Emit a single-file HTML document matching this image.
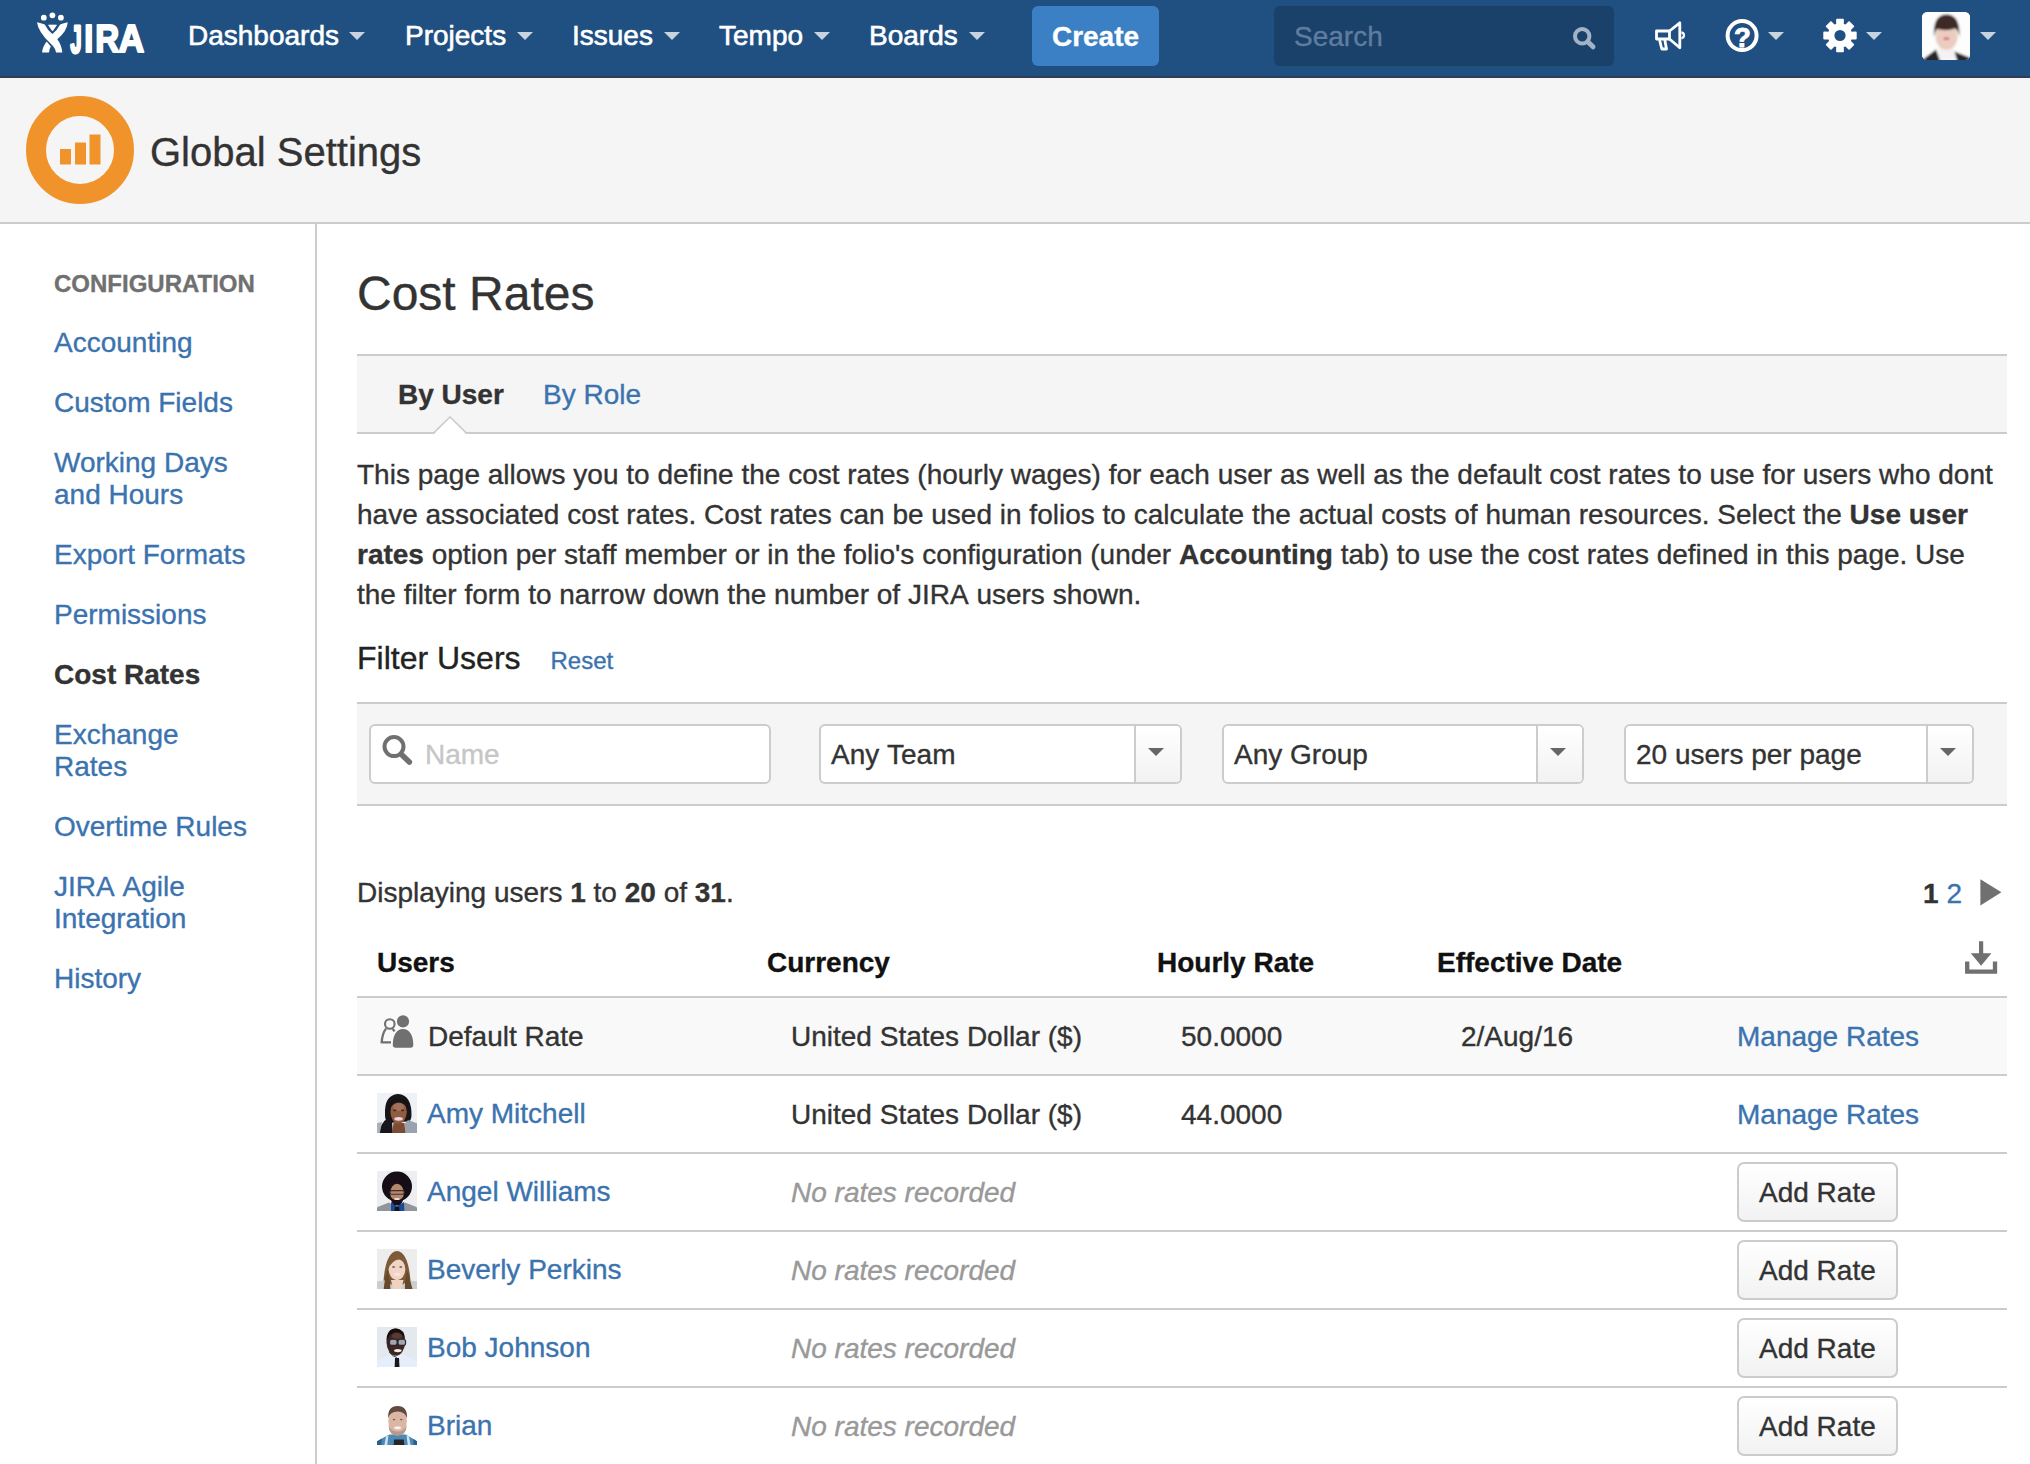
<!DOCTYPE html>
<html lang="en">
<head>
<meta charset="utf-8">
<title>Cost Rates - Global Settings - JIRA</title>
<style>
*{box-sizing:border-box;margin:0;padding:0}
html,body{width:2030px;height:1464px;overflow:hidden;background:#fff}
body{font-family:"Liberation Sans",Arial,sans-serif;font-size:28px;color:#333;position:relative;line-height:40px;-webkit-text-stroke:0.35px}
.nk{font-kerning:none}
a{color:#3b73af;text-decoration:none}
.abs{position:absolute}
/* ---------- top nav ---------- */
#header{position:absolute;left:0;top:0;width:2030px;height:78px;background:#205081;border-bottom:2px solid #2e3d54}
#header .nav{position:absolute;top:0;height:76px;line-height:72px;color:#fff;font-size:28px;white-space:nowrap;-webkit-text-stroke:0.6px #fff}
#header .caret{position:absolute;width:0;height:0;border:8px solid transparent;border-top-color:#c3d0de;border-bottom:0}
#create{position:absolute;left:1032px;top:6px;width:127px;height:60px;background:#3b7fc4;border-radius:6px;color:#fff;font-weight:bold;font-size:28px;line-height:62px;text-align:center}
#search{position:absolute;left:1274px;top:6px;width:340px;height:60px;background:#1a4169;border-radius:6px;color:#607da0;font-size:28px;line-height:62px;padding-left:20px}
/* ---------- page header ---------- */
#pagehead{position:absolute;left:0;top:78px;width:2030px;height:146px;background:#f5f5f5;border-bottom:2px solid #ccc}
#pagehead h1{position:absolute;left:150px;top:44px;font-size:40px;font-weight:normal;line-height:60px;color:#333}
/* ---------- sidebar ---------- */
#sidebar{position:absolute;left:0;top:224px;width:317px;height:1240px;border-right:2px solid #ccc;background:#fff}
#sidebar .hd{position:absolute;left:54px;top:44px;font-size:24px;font-weight:bold;color:#707070;line-height:32px;text-transform:uppercase}
#sidebar ul{position:absolute;left:54px;top:89px;list-style:none;width:230px}
#sidebar li{padding:14px 0;line-height:32px;font-size:28px}
#sidebar li.sel{font-weight:bold;color:#333}
/* ---------- content ---------- */
#content{position:absolute;left:357px;top:224px;width:1650px}
h1.title{position:absolute;left:0;top:40px;font-size:48px;font-weight:normal;line-height:60px;color:#333;white-space:nowrap}
#tabs{position:absolute;left:0;top:130px;width:1650px;height:80px;background:#f5f5f5;border-top:2px solid #ccc;border-bottom:2px solid #ccc}
#tabs span{position:absolute;top:19px;line-height:40px;font-size:28px;white-space:nowrap}
#desc{position:absolute;left:0;top:231px;width:1700px;line-height:40px;font-size:28px;white-space:nowrap;color:#333}
#filterh{position:absolute;left:0;top:412px;font-size:32px;line-height:44px;white-space:nowrap;color:#222}
#filter{position:absolute;left:0;top:478px;width:1650px;height:104px;background:#f5f5f5;border-top:2px solid #ccc;border-bottom:2px solid #ccc}
.inp{position:absolute;top:20px;height:60px;background:#fff;border:2px solid #ccc;border-radius:6px;font-size:28px;line-height:58px;white-space:nowrap;color:#333}
.sel .arrowbox{position:absolute;right:0;top:0;width:46px;height:56px;border-left:2px solid #ccc;background:linear-gradient(#fff,#f2f2f2);border-radius:0 4px 4px 0}
.sel .arrowbox i{position:absolute;left:12px;top:22px;width:0;height:0;border:8px solid transparent;border-top-color:#666;border-bottom:0}
#disp{position:absolute;left:0;top:649px;line-height:40px;white-space:nowrap}
#pager{position:absolute;right:45px;top:650px;line-height:40px;white-space:nowrap}
table{position:absolute;left:0;top:699px;width:1650px;border-collapse:collapse;table-layout:fixed}
th{height:74px;text-align:left;font-weight:bold;color:#111;padding:6px 0 0 20px;border-bottom:2px solid #ccc;vertical-align:middle}
td{height:78px;padding:2px 0 0 44px;border-bottom:2px solid #ccc;vertical-align:middle;white-space:nowrap}
td.u{padding-left:20px}
tr.def td{background:#f9f9f9}
.none{font-style:italic;color:#999}
.btn{display:inline-block;height:60px;line-height:58px;padding:0 20px;border:2px solid #ccc;border-radius:7px;background:linear-gradient(#fff,#f2f2f2);color:#333;vertical-align:middle;position:relative;top:-1px}
.av{display:inline-block;width:40px;height:40px;vertical-align:middle;margin-right:10px;position:relative;top:-3px}
</style>
</head>
<body>

<div id="header">
  <span class="nav" style="left:188px">Dashboards</span>
  <span class="nav" style="left:405px">Projects</span>
  <span class="nav" style="left:572px">Issues</span>
  <span class="nav" style="left:719px">Tempo</span>
  <span class="nav" style="left:869px">Boards</span>

  <div id="search">Search</div>
  <svg class="abs" style="left:0;top:0" width="2030" height="76" viewBox="0 0 2030 76">
    <!-- JIRA logo -->
    <g fill="#fff">
      <circle cx="43.8" cy="17.7" r="2.9"/><circle cx="52.4" cy="15.3" r="2.9"/><circle cx="60.9" cy="17.7" r="2.9"/>
      <path d="M48.6,25.1 L56.5,25.1 L52.5,30.9Z" stroke="#fff" stroke-width="0.8" stroke-linejoin="round"/>
      <path d="M37,22.2 Q41,23 44.7,24.4 Q47.5,30 52.4,34 Q57.3,30 60.1,24.4 Q63.7,23 67.7,22.2 Q67.5,30.5 57.3,39.2 Q61.5,44.5 62.3,52.4 L56,52.4 Q55.5,48 50.5,43.5 Q38,31.5 37,22.2Z"/>
      <path d="M46.7,41.6 L50.8,46.6 Q49.3,49 49,52.4 L42.1,52.4 Q42.5,47 46.7,41.6Z"/>
      <text y="51.9" font-family="Liberation Sans,Arial,sans-serif" font-weight="bold" font-size="39.5" stroke="#fff" stroke-width="2" stroke-linejoin="round"><tspan x="70.6" textLength="11" lengthAdjust="spacingAndGlyphs" stroke-width="3.2" dy="1.2">J</tspan><tspan x="84.2" textLength="9" lengthAdjust="spacingAndGlyphs" dy="-1.2">I</tspan><tspan x="95.2" textLength="24" lengthAdjust="spacingAndGlyphs">R</tspan><tspan x="118.6" textLength="25.8" lengthAdjust="spacingAndGlyphs">A</tspan></text>
    </g>
    <!-- search icon -->
    <g fill="none" stroke="#a3b3c7" stroke-linecap="round">
      <circle cx="1582.2" cy="36.2" r="7.2" stroke-width="4"/>
      <path d="M1588,42 L1593,46.8" stroke-width="5"/>
    </g>
    <!-- megaphone -->
    <g fill="none" stroke="#fff" stroke-width="2.8" stroke-linejoin="round">
      <path d="M1656.5,31 H1669.5 V39 H1656.5Z"/>
      <path d="M1669.5,31 L1679.8,22.8 V47.8 L1669.5,39"/>
      <path d="M1659.6,40 L1661.8,49 H1666.5 L1664.8,40"/>
      <path d="M1681.4,32.3 Q1684,32.8 1684,35.3 Q1684,37.8 1681.4,38.3" stroke-width="2.2"/>
    </g>
    <!-- help -->
    <circle cx="1742.1" cy="35.6" r="14.5" fill="none" stroke="#fff" stroke-width="4"/>
    <text x="1742.3" y="46.6" text-anchor="middle" font-family="Liberation Sans,Arial,sans-serif" font-weight="bold" font-size="27.5" fill="#fff" stroke="#fff" stroke-width="0.9">?</text>
    <!-- gear -->
    <path fill-rule="evenodd" fill="#fff" stroke="#fff" stroke-width="1.8" stroke-linejoin="round" d="M1837.1,24.6 L1837.0,19.7 L1843.0,19.7 L1842.9,24.6 L1845.7,25.7 L1849.1,22.2 L1853.3,26.4 L1849.8,29.8 L1850.9,32.6 L1855.8,32.5 L1855.8,38.5 L1850.9,38.4 L1849.8,41.2 L1853.3,44.6 L1849.1,48.8 L1845.7,45.3 L1842.9,46.4 L1843.0,51.3 L1837.0,51.3 L1837.1,46.4 L1834.3,45.3 L1830.9,48.8 L1826.7,44.6 L1830.2,41.2 L1829.1,38.4 L1824.2,38.5 L1824.2,32.5 L1829.1,32.6 L1830.2,29.8 L1826.7,26.4 L1830.9,22.2 L1834.3,25.7Z"/>
    <circle cx="1840" cy="35.5" r="5.6" fill="#205081"/>
    <!-- carets -->
    <g fill="#c7d3df">
      <path d="M349,32h16l-8,8z"/><path d="M517,32h16l-8,8z"/><path d="M664,32h16l-8,8z"/><path d="M814,32h16l-8,8z"/><path d="M969,32h16l-8,8z"/>
      <path d="M1768,32h16l-8,8z"/><path d="M1866,32h16l-8,8z"/><path d="M1980,32h16l-8,8z"/>
    </g>
    <!-- user avatar -->
    <defs><clipPath id="avc"><rect x="1922" y="12" width="48" height="48" rx="5.5"/></clipPath>
    <filter id="bl" x="-10%" y="-10%" width="120%" height="120%"><feGaussianBlur stdDeviation="0.9"/></filter></defs>
    <g clip-path="url(#avc)">
      <rect x="1922" y="12" width="48" height="48" fill="#fff"/>
      <g filter="url(#bl)" transform="translate(1922,12)">
        <rect x="-4" y="-4" width="56" height="56" fill="#fdfdfd"/>
        <path d="M17,34 h15 v6 l6,8 h-28 l7,-8z" fill="#f4f2f2"/>
        <ellipse cx="24.6" cy="24.6" rx="11" ry="13.2" fill="#ecccbf"/>
        <path d="M12,25 Q10.5,2.5 24.6,2.5 Q38.5,2.5 37.4,25 Q36.5,17.5 33,16.5 Q24,19.5 15.5,17 Q13,18.5 12,25Z" fill="#3c2b27"/>
        <ellipse cx="24.4" cy="26.6" rx="3.2" ry="1.2" fill="#c9566e"/>
        <path d="M-2,52 L1.5,47 L14,37.6 L18.5,50Z" fill="#26262b"/>
        <path d="M50,52 L47.5,45.5 L32.5,39.6 L35.5,50Z" fill="#26262b"/>
      </g>
    </g>
  </svg>
  <div id="create">Create</div>
</div>

<div id="pagehead">
  <svg class="abs" style="left:20px;top:12px" width="120" height="120" viewBox="20 90 120 120">
    <circle cx="80" cy="150" r="44" fill="none" stroke="#f0932b" stroke-width="20"/>
    <rect x="60" y="149" width="11" height="15.5" fill="#f0932b"/>
    <rect x="75" y="142.5" width="11" height="22" fill="#f0932b"/>
    <rect x="89.5" y="134.5" width="11" height="30" fill="#f0932b"/>
  </svg>
  <h1>Global Settings</h1>
</div>

<div id="sidebar">
  <div class="hd">Configuration</div>
  <ul>
    <li><a>Accounting</a></li>
    <li><a>Custom Fields</a></li>
    <li><a>Working Days<br>and Hours</a></li>
    <li><a>Export Formats</a></li>
    <li><a>Permissions</a></li>
    <li class="sel">Cost Rates</li>
    <li><a>Exchange<br>Rates</a></li>
    <li><a>Overtime Rules</a></li>
    <li><a>JIRA<span class="nk"> </span>Agile<br>Integration</a></li>
    <li><a>History</a></li>
  </ul>
</div>

<div id="content">
  <h1 class="title">Cost Rates</h1>
  <div id="tabs">
    <span style="left:41px;font-weight:bold;color:#333">By User</span>
    <span style="left:186px"><a>By Role</a></span>
    <svg class="abs" style="left:75px;top:60px" width="36" height="18" viewBox="0 0 36 18"><path d="M2,18 L18,2 L34,18Z" fill="#fff"/><path d="M1,17.5 L18,1 L35,17.5" fill="none" stroke="#ccc" stroke-width="1.6"/></svg>
  </div>
  <div id="desc">This page allows you to define the cost rates (hourly wages) for each user as well as the default cost rates to use for users who dont<br>have associated cost rates. Cost rates can be used in folios to calculate the actual costs of human resources. Select the <b>Use user</b><br><b>rates</b> option per staff member or in the folio's configuration (under <b>Accounting</b> tab) to use the cost rates defined in this page. Use<br>the filter form to narrow down the number of JIRA<span class="nk"> </span>users shown.</div>
  <div id="filterh">Filter Users <a style="font-size:24px;margin-left:21px">Reset</a></div>
  <div id="filter">
    <div class="inp" style="left:12px;width:402px;padding-left:54px;color:#c6c6c6"><svg class="abs" style="left:7px;top:6px" width="40" height="40" viewBox="378 732 40 40"><circle cx="394" cy="746.6" r="9.5" fill="none" stroke="#707070" stroke-width="4"/><path d="M401.5,754.5 L409.3,762" stroke="#707070" stroke-width="5.6" stroke-linecap="round"/></svg>Name</div>
    <div class="inp sel" style="left:462px;width:363px;padding-left:10px">Any<span class="nk"> </span>Team<span class="arrowbox"><i></i></span></div>
    <div class="inp sel" style="left:865px;width:362px;padding-left:10px">Any Group<span class="arrowbox"><i></i></span></div>
    <div class="inp sel" style="left:1267px;width:350px;padding-left:10px">20 users per page<span class="arrowbox"><i></i></span></div>
  </div>
  <div id="disp">Displaying users <b>1</b> to <b>20</b> of <b>31</b>.</div>
  <div id="pager"><b>1</b> <a>2</a></div>
  <svg class="abs" style="left:1623px;top:655px" width="22" height="27" viewBox="0 0 22 27"><path d="M0.4,0.2 L21.4,13.3 L0.4,26.4Z" fill="#707070"/></svg>
  <table>
    <colgroup><col style="width:390px"><col style="width:390px"><col style="width:280px"><col style="width:300px"><col></colgroup>
    <tr><th>Users</th><th>Currency</th><th>Hourly Rate</th><th>Effective Date</th><th style="position:relative"><svg class="abs" style="right:8px;top:17px" width="36" height="36" viewBox="1963 940 36 36"><path d="M1967.2,961.6 V971.7 H1995 V961.6" fill="none" stroke="#707070" stroke-width="4.3"/><path d="M1979,941.3 h4.2 v12 h8.2 l-10.3,12.4 l-10.3,-12.4 h8.2z" fill="#707070"/></svg></th></tr>
    <tr class="def"><td class="u"><svg class="av" style="margin-right:11px;top:-5px" width="40" height="40" viewBox="377 1013 40 40"><circle cx="403" cy="1021.4" r="6.1" fill="#707070"/><path d="M392.8,1045 C392.8,1036 396,1029 403,1029 C410,1029 413.3,1036 413.3,1045 Q413.3,1047.8 410.5,1047.8 H395.6 Q392.8,1047.8 392.8,1045Z" fill="#707070"/><g fill="none" stroke="#707070" stroke-width="2.3" stroke-linejoin="round"><circle cx="389.8" cy="1024" r="4.8" stroke-width="2.1"/><path d="M386,1028.6 Q382.5,1033 381.6,1042.3 H391"/><path d="M392.7,1029 L394.6,1031.4"/></g></svg><span style="position:relative;top:1px">Default Rate</span></td><td>United States Dollar ($)</td><td>50.0000</td><td>2/Aug/16</td><td class="u"><a>Manage Rates</a></td></tr>
    <tr><td class="u"><svg class="av" width="40" height="40" viewBox="0 0 40 40"><defs><filter id="b1" x="-10%" y="-10%" width="120%" height="120%"><feGaussianBlur stdDeviation="0.7"/></filter><clipPath id="c1"><rect width="40" height="40"/></clipPath></defs><g clip-path="url(#c1)"><rect x="-4" y="-4" width="48" height="48" fill="#eef1f5"/><g filter="url(#b1)"><path d="M8,22 Q7,2 21,1 Q35,2 34.5,23 Q34,29 30,28.5 L12,30 Q8,28 8,22Z" fill="#141218"/><path d="M11,25 Q3,30 1.5,42 L16,42 L15,28Z" fill="#17131a"/><path d="M28,42 L28,30.5 L31,27 L42,31 L42,42Z" fill="#9aa3ad"/><path d="M-2,30.5 L5,29 L2.5,42 L-2,42Z" fill="#aab1b9"/><path d="M15,42 L16.5,30 L27.5,30 L28.5,42Z" fill="#7d4c32"/><ellipse cx="21.6" cy="18.8" rx="8.2" ry="11.8" fill="#8f5b40"/><ellipse cx="21.6" cy="14" rx="5.5" ry="4" fill="#a4705a"/><path d="M12,17 Q12.5,6 22,6 Q31.5,7 31.5,18 Q28.5,9.5 21,9.5 Q15,10.5 12,17Z" fill="#141218"/><ellipse cx="17.8" cy="17.3" rx="1.7" ry="0.9" fill="#3b2a2a"/><ellipse cx="25.6" cy="17.3" rx="1.7" ry="0.9" fill="#3b2a2a"/><ellipse cx="21.6" cy="25.8" rx="4.3" ry="1.9" fill="#f1d3dc"/></g></g></svg><a>Amy Mitchell</a></td><td>United States Dollar ($)</td><td>44.0000</td><td></td><td class="u"><a>Manage Rates</a></td></tr>
    <tr><td class="u"><svg class="av" width="40" height="40" viewBox="0 0 40 40"><defs><filter id="b2" x="-10%" y="-10%" width="120%" height="120%"><feGaussianBlur stdDeviation="0.7"/></filter><clipPath id="c2"><rect width="40" height="40"/></clipPath></defs><g clip-path="url(#c2)"><rect x="-4" y="-4" width="48" height="48" fill="#eceef1"/><g filter="url(#b2)"><circle cx="20" cy="15.5" r="15" fill="#121113"/><path d="M-2,42 L0.5,36 L12,31.5 L20,37 L28,31.5 L39.5,36 L42,42Z" fill="#91969d"/><path d="M14,31 L20,35 L27,31 L27.5,42 L14,42Z" fill="#1c4a94"/><path d="M18,36 L22,36 L23,42 L17,42Z" fill="#10161f"/><ellipse cx="20" cy="22" rx="6.8" ry="9.2" fill="#b5866a"/><path d="M13.3,25 Q14,34.5 20,34.5 Q26,34.5 26.7,25 Q24,29.5 20,28.8 Q16,29.5 13.3,25Z" fill="#141012"/><rect x="12.8" y="19.6" width="14.6" height="3.6" rx="1.6" fill="none" stroke="#3a3234" stroke-width="1.1"/><ellipse cx="20" cy="28" rx="2.8" ry="1.1" fill="#f1e6e3"/></g></g></svg><a>Angel Williams</a></td><td class="none">No rates recorded</td><td></td><td></td><td class="u"><span class="btn">Add Rate</span></td></tr>
    <tr><td class="u"><svg class="av" width="40" height="40" viewBox="0 0 40 40"><defs><filter id="b3" x="-10%" y="-10%" width="120%" height="120%"><feGaussianBlur stdDeviation="0.7"/></filter><clipPath id="c3"><rect width="40" height="40"/></clipPath></defs><g clip-path="url(#c3)"><rect x="-4" y="-4" width="48" height="48" fill="#ededee"/><g filter="url(#b3)"><path d="M6,42 Q7,3 20,2 Q33,3 34,42Z" fill="#7a5a38"/><path d="M-2,42 L-2,32.5 L8,31.5 L20,39 L32,31.5 L42,32.5 L42,42Z" fill="#cbced1"/><path d="M14,31 L26.5,31 L24,42 L16.5,42Z" fill="#f0d2c0"/><ellipse cx="20" cy="20.3" rx="8.3" ry="11" fill="#f1d4c3"/><path d="M10.5,21 Q11,6 21,6.5 Q30,7 30,21 Q28,11.5 22,10.5 Q15,11 10.5,21Z" fill="#7f5c38"/><ellipse cx="16.6" cy="18" rx="1.6" ry="0.8" fill="#5b4a45"/><ellipse cx="23.8" cy="18" rx="1.6" ry="0.8" fill="#5b4a45"/><ellipse cx="20.2" cy="25.2" rx="3.4" ry="1.5" fill="#f6e4e6"/><path d="M6.5,42 Q7.5,30 10.5,21 L13,33 L13.5,42Z" fill="#66482b"/><path d="M36,42 Q33,30 30,21 L28,33 L28,42Z" fill="#66482b"/></g></g></svg><a>Beverly Perkins</a></td><td class="none">No rates recorded</td><td></td><td></td><td class="u"><span class="btn">Add Rate</span></td></tr>
    <tr><td class="u"><svg class="av" width="40" height="40" viewBox="0 0 40 40"><defs><filter id="b4" x="-10%" y="-10%" width="120%" height="120%"><feGaussianBlur stdDeviation="0.7"/></filter><clipPath id="c4"><rect width="40" height="40"/></clipPath></defs><g clip-path="url(#c4)"><rect x="-4" y="-4" width="48" height="48" fill="#e4e8ef"/><g filter="url(#b4)"><path d="M-2,42 L-1,33.5 L12,28 L27,28 L40,34 L42,42Z" fill="#e6eefb"/><ellipse cx="18.8" cy="15.2" rx="9.3" ry="13.6" fill="#3d2821"/><ellipse cx="20" cy="9" rx="5" ry="3" fill="#5a3b30"/><path d="M9.5,14 Q9.5,1.5 19,1.5 Q28,2 28,13 Q25,5 19,5 Q13,6 9.5,14Z" fill="#17100f"/><rect x="12.5" y="12.2" width="7.6" height="6.2" rx="2.2" fill="#9fa6b1" stroke="#2a2426" stroke-width="1.1"/><rect x="21" y="12.2" width="7.6" height="6.2" rx="2.2" fill="#9fa6b1" stroke="#2a2426" stroke-width="1.1"/><ellipse cx="20.8" cy="23.6" rx="3.8" ry="1.6" fill="#f3ece9"/><path d="M12,25 Q15,29.5 20,30.5" fill="none" stroke="#4a4a52" stroke-width="1"/><path d="M18,31 L22,31 L22.6,42 L17.6,42Z" fill="#15151d"/></g></g></svg><a>Bob Johnson</a></td><td class="none">No rates recorded</td><td></td><td></td><td class="u"><span class="btn">Add Rate</span></td></tr>
    <tr><td class="u"><svg class="av" width="40" height="40" viewBox="0 0 40 40"><defs><filter id="b5" x="-10%" y="-10%" width="120%" height="120%"><feGaussianBlur stdDeviation="0.7"/></filter><clipPath id="c5"><rect width="40" height="40"/></clipPath></defs><g clip-path="url(#c5)"><rect x="-4" y="-4" width="48" height="48" fill="#ffffff"/><g filter="url(#b5)"><path d="M-2,42 L-2,37.5 L12,29.5 L29,29.5 L42,37.5 L42,42Z" fill="#4c89b6"/><path d="M-2,42 L-2,37.5 L5,33.5 L4,42Z M37,42 L36,33.8 L42,37.5 L42,42Z" fill="#2e5f8a"/><path d="M9,31.5 L11.5,30 L10,42 L7,42Z M29.5,30 L32,31.5 L34,42 L31,42Z" fill="#cfe3f2"/><path d="M17,34.5 L26.8,34.5 L27.5,42 L16.5,42Z" fill="#26262b"/><ellipse cx="20.6" cy="16" rx="9.3" ry="14" fill="#dcb6a2"/><path d="M11.5,20 Q12,31 20.6,31 Q29,31 29.8,20 Q27,27 20.6,26.5 Q14,27 11.5,20Z" fill="#b59a8b"/><path d="M11.2,13 Q10.5,1 20.6,1 Q30.5,1 30,13 Q28,6.5 20.6,6.5 Q13,6.5 11.2,13Z" fill="#5f4b3f"/><ellipse cx="17" cy="14.6" rx="1.4" ry="0.8" fill="#5e6e85"/><ellipse cx="24.2" cy="14.6" rx="1.4" ry="0.8" fill="#5e6e85"/><ellipse cx="20.6" cy="22.8" rx="3.4" ry="1.5" fill="#f7f0ee"/></g></g></svg><a>Brian</a></td><td class="none">No rates recorded</td><td></td><td></td><td class="u"><span class="btn">Add Rate</span></td></tr>
  </table>
</div>

</body>
</html>
